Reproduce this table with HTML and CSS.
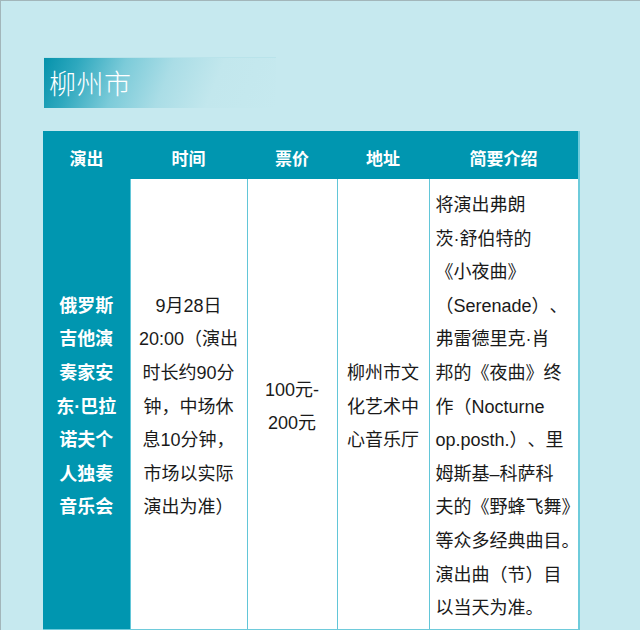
FILE: index.html
```html
<!DOCTYPE html>
<html lang="zh-CN">
<head>
<meta charset="utf-8">
<title>柳州市</title>
<link rel="stylesheet" href="styles.css">
</head>
<body>
<div class="page">
  <div class="title">柳州市</div>
  <table class="shows">
    <colgroup>
      <col class="c1"><col class="c2"><col class="c3"><col class="c4"><col class="c5">
    </colgroup>
    <thead>
      <tr><th>演出</th><th>时间</th><th>票价</th><th>地址</th><th>简要介绍</th></tr>
    </thead>
    <tbody>
      <tr>
        <td class="name">俄罗斯<br>吉他演<br>奏家安<br>东·巴拉<br>诺夫个<br>人独奏<br>音乐会</td>
        <td class="center">9月28日<br>20:00（演出<br>时长约90分<br>钟，中场休<br>息10分钟，<br>市场以实际<br>演出为准）</td>
        <td class="center">100元-<br>200元</td>
        <td class="center">柳州市文<br>化艺术中<br>心音乐厅</td>
        <td class="desc">将演出弗朗<br>茨·舒伯特的<br>《小夜曲》<br>（Serenade）、<br>弗雷德里克·肖<br>邦的《夜曲》终<br>作（Nocturne<br>op.posth.）、里<br>姆斯基–科萨科<br>夫的《野蜂飞舞》<br>等众多经典曲目。<br>演出曲（节）目<br>以当天为准。</td>
      </tr>
    </tbody>
  </table>
</div>
</body>
</html>
```

FILE: styles.css
```css
html, body {
  margin: 0;
  padding: 0;
}
body {
  background: #c6e9ef;
  font-family: "Liberation Sans", "Noto Sans CJK SC", sans-serif;
  text-spacing-trim: space-all;
}
.page {
  width: 640px;
  height: 630px;
  box-sizing: border-box;
  border-top: 1px solid #a2b6ba;
  border-left: 1px solid #a2b6ba;
  padding: 56px 0 0 42px;
  overflow: hidden;
}
.title {
  width: 227px;
  height: 50px;
  margin-left: 1px;
  padding-left: 5px;
  box-sizing: content-box;
  background: linear-gradient(112deg, #0592ab 0%, #2ea8be 14%, #7ccbd9 33%, #aadde6 52%, #c2e7ed 72%, #c6e9ef 100%);
  border-top: 1px solid #b9e3ea;
  color: #ffffff;
  font-family: "Noto Sans CJK SC", sans-serif;
  font-weight: 300;
  font-size: 27px;
  line-height: 49px;
  letter-spacing: 0.5px;
}
.shows {
  margin-top: 23px;
  width: 536px;
  table-layout: fixed;
  border-collapse: collapse;
  font-size: 18px;
  color: #1a1a1a;
  border-right: 2px solid #6ecbdb;
  border-bottom: 2px solid #6ecbdb;
}
.c1 { width: 87px; }
.c2 { width: 117px; }
.c3 { width: 90px; }
.c4 { width: 92px; }
.c5 { width: 150px; }
.shows th {
  background: #0096b0;
  color: #ffffff;
  font-family: "Noto Sans CJK SC", sans-serif;
  font-weight: 700;
  font-size: 17px;
  height: 48px;
  padding: 4px 0 0 0;
  box-sizing: border-box;
  text-align: center;
}
.shows td {
  background: #ffffff;
  border-left: 1px solid #62c6d8;
  padding: 10px 0 3px 0;
  line-height: 33.6px;
  vertical-align: middle;
  white-space: nowrap;
}
.shows td.name {
  background: #0096b0;
  border-left: none;
  color: #ffffff;
  font-weight: 700;
  text-align: center;
}
.shows td.center {
  text-align: center;
}
.shows td.desc {
  padding-left: 6px;
  text-align: left;
}
```
